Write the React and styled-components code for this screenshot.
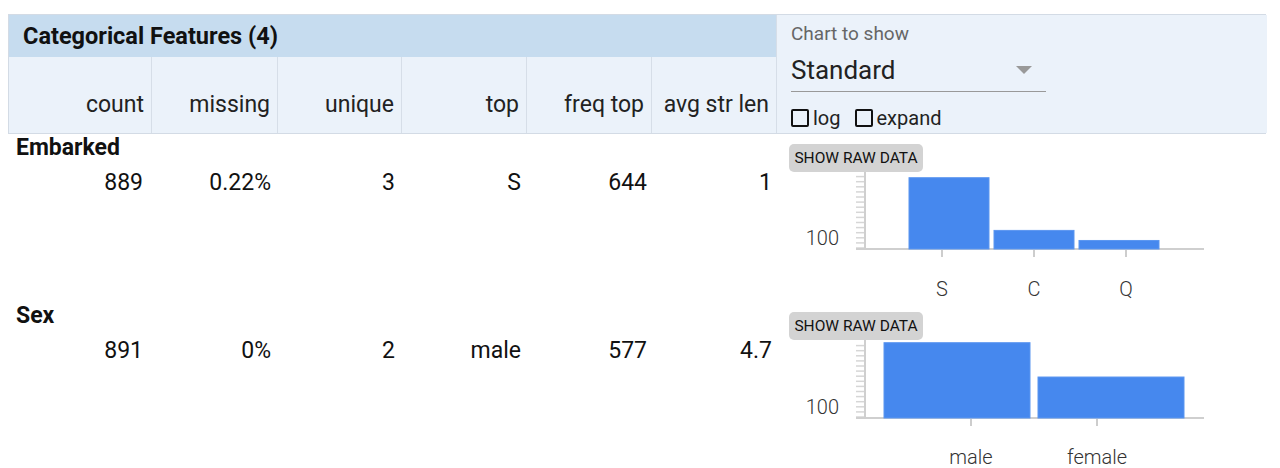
import React from "react";
import styled, { createGlobalStyle } from "styled-components";

const GlobalStyle = createGlobalStyle`
  body {
    margin: 0;
    background: #ffffff;
    font-family: Roboto, "Liberation Sans", sans-serif;
    color: #111;
  }
`;

const COLS = "142px 126px 124px 125px 125px 125px 491px";

const features = [
  {
    name: "Embarked",
    stats: ["889", "0.22%", "3", "S", "644", "1"],
    bars: [
      { label: "S", value: 644 },
      { label: "C", value: 168 },
      { label: "Q", value: 77 },
    ],
    scale: 0.1107,
    base: 77,
    barX: 134,
    barW: 80,
    barGap: 5,
    tickX: [167, 259, 351],
  },
  {
    name: "Sex",
    stats: ["891", "0%", "2", "male", "577", "4.7"],
    bars: [
      { label: "male", value: 577 },
      { label: "female", value: 314 },
    ],
    scale: 0.1305,
    base: 78,
    barX: 109,
    barW: 146,
    barGap: 8,
    tickX: [196, 322],
  },
];

const headers = ["count", "missing", "unique", "top", "freq top", "avg str len"];
// values sit a touch further right than their headers, except in "count"
const valuePad = [7, 5, 5, 4, 3, 3];

const Chart = ({ f }) => {
  const minor = [];
  for (let y = f.base - 1; y > 3; y -= 5.1) minor.push(y);
  return (
    <svg width="491" height="130" style={{ display: "block" }}>
      {minor.map((y, i) => (
        <line key={i} x1="81" x2="90" y1={y} y2={y} stroke="#d6d6d6" strokeWidth="1.5" />
      ))}
      <line x1="90" x2="90" y1="0" y2={f.base} stroke="#cfcfcf" strokeWidth="2" />
      <line x1="81" x2="429" y1={f.base} y2={f.base} stroke="#cfcfcf" strokeWidth="2" />
      {f.bars.map((b, i) => {
        const h = b.value * f.scale;
        return (
          <rect
            key={b.label}
            x={f.barX + i * (f.barW + f.barGap)}
            y={f.base - h}
            width={f.barW}
            height={h}
            fill="#4688ee"
            stroke="#5b96f0"
            strokeWidth="1"
          />
        );
      })}
      {f.tickX.map((x, i) => (
        <g key={i}>
          <line x1={x} x2={x} y1={f.base + 1} y2={f.base + 8} stroke="#bdbdbd" strokeWidth="1.5" />
          <text
            x={x}
            y="124"
            textAnchor="middle"
            fontFamily="Roboto, 'Liberation Sans', sans-serif"
            fontWeight="300"
            fontSize="20"
            fill="#333"
          >
            {f.bars[i].label}
          </text>
        </g>
      ))}
      <text
        x="64"
        y={f.base - 4}
        textAnchor="end"
        fontFamily="Roboto, 'Liberation Sans', sans-serif"
        fontWeight="300"
        fontSize="20"
        fill="#333"
      >
        100
      </text>
    </svg>
  );
};

const App = () => {
  return (
    <Page>
      <GlobalStyle />
      <Header>
        <Title>Categorical Features (4)</Title>
        {headers.map((h, i) => (
          <HeadCell key={h} $first={i === 0}>
            {h}
          </HeadCell>
        ))}
        <Controls>
          <ControlLabel>Chart to show</ControlLabel>
          <Select>
            <span>Standard</span>
            <Caret />
          </Select>
          <Checks>
            <Check>
              <Box />
              log
            </Check>
            <Check>
              <Box />
              expand
            </Check>
          </Checks>
        </Controls>
      </Header>
      {features.map((f) => (
        <Feature key={f.name}>
          <Name>{f.name}</Name>
          {f.stats.map((s, i) => (
            <Value key={i} $pad={valuePad[i]}>
              {s}
            </Value>
          ))}
          <ChartCell>
            <RawButton>SHOW RAW DATA</RawButton>
            <Chart f={f} />
          </ChartCell>
        </Feature>
      ))}
    </Page>
  );
};

export default App;

const Page = styled.div`
  padding: 14px 14px 0 8px;
  width: 1258px;
`;

const Header = styled.div`
  display: grid;
  grid-template-columns: ${COLS};
  grid-template-rows: 42px 76px;
  border: 1px solid #d3dbe5;
  width: 1258px;
  box-sizing: border-box;
`;

const Title = styled.div`
  grid-column: 1 / 7;
  background: #c6dcef;
  font-weight: 700;
  font-size: 23.5px;
  display: flex;
  align-items: center;
  padding-left: 14px;
  color: #111;
`;

const HeadCell = styled.div`
  background: #ebf2fa;
  border-left: ${(p) => (p.$first ? "none" : "1px solid #d6dee8")};
  display: flex;
  align-items: flex-end;
  justify-content: flex-end;
  padding: 0 7px 15px 0;
  font-size: 23px;
  line-height: 26px;
  color: #222;
`;

const Controls = styled.div`
  grid-column: 7;
  grid-row: 1 / 3;
  background: #ebf2fa;
  border-left: 1px solid #d6dee8;
  padding: 7px 0 0 14px;
  display: flex;
  flex-direction: column;
`;

const ControlLabel = styled.div`
  font-size: 19px;
  line-height: 24px;
  color: #666;
`;

const Select = styled.div`
  width: 255px;
  height: 46px;
  border-bottom: 1px solid #999;
  display: flex;
  align-items: center;
  justify-content: space-between;
  padding: 2px 14px 0 0;
  box-sizing: border-box;
  font-size: 26px;
  color: #222;
`;

const Caret = styled.div`
  width: 0;
  height: 0;
  border-left: 8px solid transparent;
  border-right: 8px solid transparent;
  border-top: 8px solid #999;
`;

const Checks = styled.div`
  display: flex;
  gap: 14px;
  margin-top: 14px;
`;

const Check = styled.label`
  display: flex;
  align-items: center;
  font-size: 20px;
  line-height: 24px;
  color: #222;
`;

const Box = styled.span`
  width: 14px;
  height: 14px;
  border: 2px solid #111;
  border-radius: 2px;
  margin-right: 4px;
`;

const Feature = styled.div`
  display: grid;
  grid-template-columns: ${COLS};
  grid-template-rows: 26px auto;
  row-gap: 9px;
  height: 167px;
  padding-top: 1px;
`;

const Name = styled.div`
  grid-column: 1 / 7;
  grid-row: 1;
  font-weight: 700;
  font-size: 23px;
  line-height: 26px;
  padding-left: 8px;
  color: #111;
`;

const Value = styled.div`
  grid-row: 2;
  text-align: right;
  padding-right: ${(p) => p.$pad}px;
  font-size: 23px;
  line-height: 26px;
  color: #111;
`;

const ChartCell = styled.div`
  grid-column: 7;
  grid-row: 1 / 3;
  padding-top: 9px;
`;

const RawButton = styled.div`
  margin-left: 14px;
  width: 134px;
  height: 28px;
  box-sizing: border-box;
  background: #d3d3d3;
  border-radius: 5px;
  font-size: 15.5px;
  display: flex;
  align-items: center;
  justify-content: center;
  color: #111;
`;
